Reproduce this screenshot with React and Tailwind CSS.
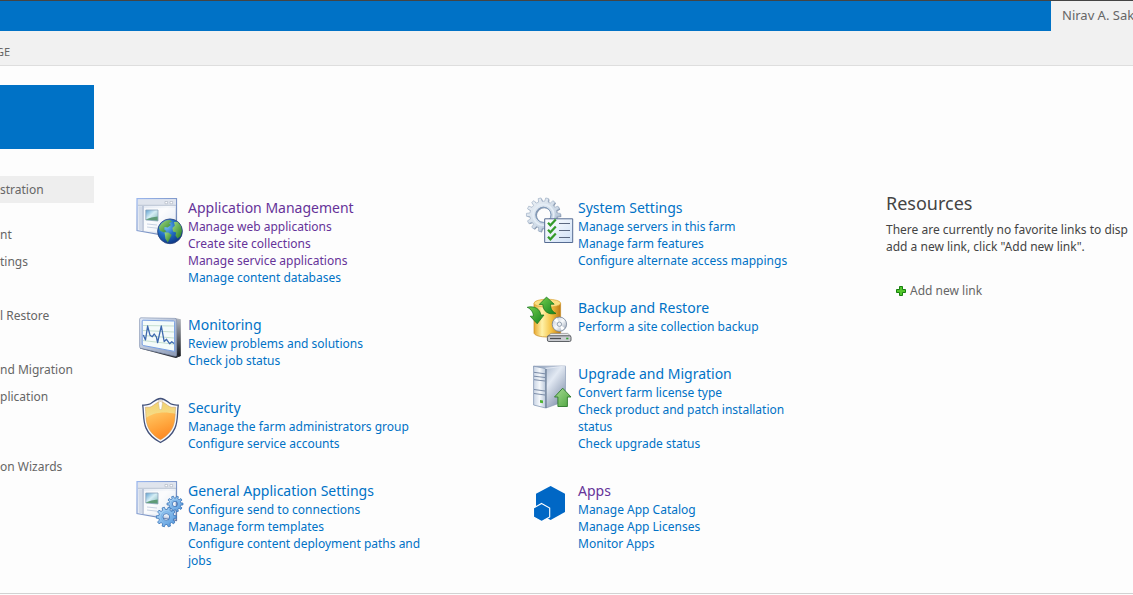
const SIDE_LINKS = ['nt', 'tings', '', 'l Restore', '', 'nd Migration', 'plication', '']

const LEFT = [
  {
    title: 'Application Management',
    Icon: WindowGlobeIcon,
    visited: true,
    links: [
      { label: 'Manage web applications', visited: true },
      { label: 'Create site collections', visited: true },
      { label: 'Manage service applications', visited: true },
      { label: 'Manage content databases' },
    ],
  },
  {
    title: 'Monitoring',
    Icon: MonitorIcon,
    links: [{ label: 'Review problems and solutions' }, { label: 'Check job status' }],
  },
  {
    title: 'Security',
    Icon: ShieldIcon,
    links: [{ label: 'Manage the farm administrators group' }, { label: 'Configure service accounts' }],
  },
  {
    title: 'General Application Settings',
    Icon: WindowGearsIcon,
    links: [
      { label: 'Configure send to connections' },
      { label: 'Manage form templates' },
      { label: 'Configure content deployment paths and jobs' },
    ],
  },
]

const RIGHT = [
  {
    title: 'System Settings',
    Icon: GearChecklistIcon,
    links: [
      { label: 'Manage servers in this farm' },
      { label: 'Manage farm features' },
      { label: 'Configure alternate access mappings' },
    ],
  },
  {
    title: 'Backup and Restore',
    Icon: BackupIcon,
    links: [{ label: 'Perform a site collection backup' }],
  },
  {
    title: 'Upgrade and Migration',
    Icon: ServerIcon,
    links: [
      { label: 'Convert farm license type' },
      { label: 'Check product and patch installation status' },
      { label: 'Check upgrade status' },
    ],
  },
  {
    title: 'Apps',
    Icon: AppsIcon,
    visited: true,
    links: [{ label: 'Manage App Catalog' }, { label: 'Manage App Licenses' }, { label: 'Monitor Apps' }],
  },
]

function Icon({ children }) {
  return (
    <svg viewBox="0 0 48 48" className="w-12 h-12 shrink-0 overflow-visible" aria-hidden="true">
      {children}
    </svg>
  )
}

// Toothed wheel outline around (cx, cy) with a round hole
function gearPath(cx, cy, outer, inner, hole, teeth) {
  const pts = []
  const step = (Math.PI * 2) / teeth
  for (let i = 0; i < teeth; i++) {
    const a = i * step
    ;[[-0.3, inner], [-0.19, outer], [0.19, outer], [0.3, inner]].forEach(([t, r]) => {
      pts.push(`${(cx + Math.cos(a + t * step) * r).toFixed(2)} ${(cy + Math.sin(a + t * step) * r).toFixed(2)}`)
    })
  }
  return `M${pts.join('L')}Z M${cx - hole} ${cy}a${hole} ${hole} 0 1 0 ${hole * 2} 0a${hole} ${hole} 0 1 0 ${-hole * 2} 0Z`
}

function AppWindow({ id }) {
  return (
    <>
      <defs>
        <linearGradient id={`${id}-body`} x1="0" y1="0" x2="1" y2="1">
          <stop offset="0" stopColor="#dbe3f0" />
          <stop offset="0.5" stopColor="#f6f8fb" />
          <stop offset="1" stopColor="#b4c2dc" />
        </linearGradient>
        <linearGradient id={`${id}-pic`} x1="0" y1="0" x2="1" y2="1">
          <stop offset="0" stopColor="#5e9fd0" />
          <stop offset="0.45" stopColor="#d5eef5" />
          <stop offset="1" stopColor="#7fb4b4" />
        </linearGradient>
        <linearGradient id={`${id}-edge`} x1="0" y1="0" x2="1" y2="1">
          <stop offset="0" stopColor="#9bb7ee" />
          <stop offset="1" stopColor="#667ca9" />
        </linearGradient>
      </defs>
      <path d="M1 .7H40.5V39.5L1 32.5Z" fill={`url(#${id}-body)`} stroke={`url(#${id}-edge)`} strokeWidth="1.2" />
      <path d="M2 1.6H39.8V7H2Z" fill="#dfe4ed" />
      <path d="M2 7.3H40" stroke="#b9c3d3" strokeWidth="1" />
      <path d="M29 3.5h2.6v2.2H29zM34 3.5h2.6v2.2H34z" fill="#fff" stroke="#a7b0c0" strokeWidth=".6" />
      <path d="M7 8V33.5" stroke="#a3b0c8" strokeWidth="1.2" />
      <path d="M8 10H39V37L8 32Z" fill="#fff" opacity=".55" />
      <path d="M2.7 8.5H6V32.3L2.7 31.7Z" fill="#d3dbe8" />
      <path d="M9.8 12H22V23L9.8 22Z" fill={`url(#${id}-pic)`} stroke="#8ea4bd" strokeWidth=".8" />
      <path d="M10.2 21.2L15.5 19.6L21.6 18.6V22.6L10.2 21.7Z" fill="#5e9b77" />
      <path d="M11 26L21 27M11 29L21 30.2" stroke="#c2cddf" strokeWidth=".9" />
    </>
  )
}

function WindowGlobeIcon() {
  return (
    <Icon>
      <AppWindow id="globe-win" />
      <defs>
        <radialGradient id="sea" cx=".35" cy=".3" r=".8">
          <stop offset="0" stopColor="#7cc4f5" />
          <stop offset=".45" stopColor="#236fc6" />
          <stop offset="1" stopColor="#092c79" />
        </radialGradient>
        <linearGradient id="land" x1="0" y1="0" x2="1" y2="1">
          <stop offset="0" stopColor="#a4dc83" />
          <stop offset="1" stopColor="#237c23" />
        </linearGradient>
      </defs>
      <circle cx="34" cy="33.3" r="12.4" fill="url(#sea)" stroke="#263f79" strokeWidth=".8" />
      <path d="M23 29.5C25 25 29 22.2 33.5 22L36 23.4L33 25.2L35 27L31.5 29.5L28.5 29L28.2 31.6L30.5 33.2L28 34.5L24 32.8Z" fill="url(#land)" />
      <path d="M28.6 34.6L32.5 34.4L35.7 37L34 40.2L31.8 44.5L29.4 40.8Z" fill="url(#land)" />
      <path d="M38 24L41.5 23.8L45 28L46 33L44.7 38L41.5 40.5L39.5 37.5L40.2 34.5L37 33.4L36.4 30L38.8 27.8Z" fill="url(#land)" />
    </Icon>
  )
}

function WindowGearsIcon() {
  return (
    <Icon>
      <AppWindow id="gears-win" />
      <defs>
        <linearGradient id="blue-gear" x1="0" y1="0" x2="1" y2="1">
          <stop offset="0" stopColor="#bee1fb" />
          <stop offset="1" stopColor="#4d93da" />
        </linearGradient>
      </defs>
      <path d={gearPath(39, 23, 8, 5.9, 2.7, 10)} fill="url(#blue-gear)" fillRule="evenodd" stroke="#3772b8" strokeWidth=".8" />
      <path d={gearPath(30.3, 36, 10, 7.6, 3.4, 10)} fill="url(#blue-gear)" fillRule="evenodd" stroke="#3772b8" strokeWidth=".8" />
      <circle cx="30.3" cy="36" r="5.2" fill="none" stroke="#74afe6" strokeWidth=".8" />
      <circle cx="39" cy="23" r="4" fill="none" stroke="#74afe6" strokeWidth=".7" />
    </Icon>
  )
}

function MonitorIcon() {
  return (
    <Icon>
      <defs>
        <linearGradient id="mon-frame" x1="0" y1="0" x2="1" y2="1">
          <stop offset="0" stopColor="#e4ecf8" />
          <stop offset="1" stopColor="#8b99b5" />
        </linearGradient>
        <linearGradient id="mon-side" x1="0" y1="0" x2="0" y2="1">
          <stop offset="0" stopColor="#b4b8c0" />
          <stop offset="1" stopColor="#111318" />
        </linearGradient>
      </defs>
      <path d="M39 3L44.8 4.2V41L39.5 43Z" fill="url(#mon-side)" />
      <path d="M4 33.5L39.5 43L44.5 41L40 40L5 31Z" fill="#30343d" />
      <path d="M5 2.8L39 3.4Q40.6 3.5 40.6 5V39.5Q40.6 41.5 38.8 41.1L4.8 33.3Q3.6 33 3.6 31.7V4.3Q3.6 2.8 5 2.8Z" fill="url(#mon-frame)" stroke="#8494b2" strokeWidth=".7" />
      <path d="M7 5.2L37.6 6Q38.6 6 38.6 7.2V36.4L7.2 30.5Q6.2 30.2 6.2 29V6Q6.2 5.2 7 5.2Z" fill="#f4fbfa" stroke="#779fe3" strokeWidth="1" />
      <path d="M7 10.5L38 11M7 15.5L38 17M7 20.5L38 23M7 25.5L38 29.2" stroke="#b9d7c4" strokeWidth=".8" />
      <path d="M7.3 20L9.5 25L11.6 11L14 20.2L16.3 21.7L18.3 19L20.4 22L21.6 27.6L25.3 11L28.2 26.6L30.5 24.3L33.6 28.7L35.8 26.7L38 28.4" fill="none" stroke="#3c68ae" strokeWidth="1.3" strokeLinejoin="round" />
    </Icon>
  )
}

function ShieldIcon() {
  return (
    <Icon>
      <defs>
        <linearGradient id="shield-top" x1="0" y1="0" x2="0" y2="1">
          <stop offset="0" stopColor="#f0cf6a" />
          <stop offset="1" stopColor="#fff0b4" />
        </linearGradient>
        <linearGradient id="shield-low" x1=".2" y1="0" x2=".7" y2="1">
          <stop offset="0" stopColor="#ffc864" />
          <stop offset=".5" stopColor="#ffa33a" />
          <stop offset="1" stopColor="#fb7b18" />
        </linearGradient>
        <clipPath id="shield-clip">
          <path d="M24.5 3.5C20.5 4.2 18.2 7 15.5 8.5C13.3 9.8 11.4 9 9.3 9.3C10.7 20 7.5 32 24.5 41.8C41.5 32 38.3 20 39.7 9.3C37.6 9 35.7 9.8 33.5 8.5C30.8 7 28.5 4.2 24.5 3.5Z" />
        </clipPath>
      </defs>
      <path d="M24.5.5C20 .8 17.4 4 14.5 5.8C12 7.3 9.8 6.4 6.7 7.2C8.8 18 3.8 33.5 24.5 44.5C45.2 33.5 40.2 18 42.3 7.2C39.2 6.4 37 7.3 34.5 5.8C31.6 4 29 .8 24.5.5Z" fill="#fbfcff" stroke="#43527b" strokeWidth="1.3" />
      <g clipPath="url(#shield-clip)">
        <path d="M5 0H44V45H5Z" fill="url(#shield-top)" />
        <path d="M5 25C13 14 28 12 44 17V45H5Z" fill="url(#shield-low)" />
      </g>
      <path d="M22.2 2.5L23.5 11.5H25.5L26.8 2.5Z" fill="#fff" stroke="#b9a98a" strokeWidth=".4" />
      <path d="M24.5 3.5C20.5 4.2 18.2 7 15.5 8.5C13.3 9.8 11.4 9 9.3 9.3C10.7 20 7.5 32 24.5 41.8C41.5 32 38.3 20 39.7 9.3C37.6 9 35.7 9.8 33.5 8.5C30.8 7 28.5 4.2 24.5 3.5Z" fill="none" stroke="#c79b62" strokeWidth=".5" />
    </Icon>
  )
}

function GearChecklistIcon() {
  return (
    <Icon>
      <defs>
        <linearGradient id="grey-gear" x1="0" y1="0" x2="1" y2="1">
          <stop offset="0" stopColor="#f0f4f8" />
          <stop offset=".6" stopColor="#cdd9e6" />
          <stop offset="1" stopColor="#8ca2bd" />
        </linearGradient>
        <linearGradient id="sheet" x1="0" y1="0" x2="1" y2="1">
          <stop offset="0" stopColor="#ffffff" />
          <stop offset="1" stopColor="#cfe0f6" />
        </linearGradient>
      </defs>
      <path d={gearPath(18.3, 17.6, 17, 13.6, 7.3, 14)} fill="#8696ad" fillRule="evenodd" />
      <path d={gearPath(17.4, 16.8, 17, 13.6, 7.6, 14)} fill="url(#grey-gear)" fillRule="evenodd" stroke="#9fb0c6" strokeWidth=".7" />
      <circle cx="17.4" cy="16.8" r="10.4" fill="none" stroke="#e4edf6" strokeWidth="1.6" />
      <circle cx="17.4" cy="16.8" r="7.6" fill="none" stroke="#7592b5" strokeWidth=".8" />
      <path d="M18.7 20.8H46.7V44.5H18.7Z" fill="url(#sheet)" stroke="#556b92" strokeWidth="1" />
      <path d="M33 25.5H44M33 32.5H44M33 39.5H44" stroke="#5b6880" strokeWidth="1" />
      <path d="M22 24.8L24.4 27.3L29.8 21.5M22 31.8L24.4 34.3L29.8 28.5M22 38.8L24.4 41.3L29.8 35.5" fill="none" stroke="#349b2a" strokeWidth="2.2" />
    </Icon>
  )
}

function BackupIcon() {
  return (
    <Icon>
      <defs>
        <linearGradient id="drum" x1="0" y1="0" x2="1" y2="0">
          <stop offset="0" stopColor="#e7a72e" />
          <stop offset=".3" stopColor="#fff2a9" />
          <stop offset=".65" stopColor="#f5c244" />
          <stop offset="1" stopColor="#bc7813" />
        </linearGradient>
        <linearGradient id="leaf" x1="0" y1="0" x2="1" y2="1">
          <stop offset="0" stopColor="#74d04d" />
          <stop offset="1" stopColor="#14831f" />
        </linearGradient>
        <linearGradient id="disc" x1="0" y1="0" x2="1" y2="1">
          <stop offset="0" stopColor="#b7c1cf" />
          <stop offset=".5" stopColor="#f9fbfd" />
          <stop offset="1" stopColor="#8996a9" />
        </linearGradient>
      </defs>
      <path d="M8 5.2V34.8C8 40.4 34.6 40.4 34.6 34.8V5.2Z" fill="url(#drum)" stroke="#c98d22" strokeWidth=".7" />
      <ellipse cx="21.3" cy="5.2" rx="13.3" ry="4" fill="#fbdf80" stroke="#d8a236" strokeWidth=".7" />
      <path d="M20.5 -1L28.2 6.2H24.6C24.3 10.3 26 13.3 30 15.4C22.5 17.3 17 13.3 16.8 6.5H13.2Z" fill="url(#leaf)" stroke="#12701b" strokeWidth=".7" />
      <path d="M1.2 9.3C8.5 7.5 14.2 11 14.8 17H18L11.2 25.8L4.2 18.2H7.4C7.2 14.5 5.5 11.3 1.2 9.3Z" fill="url(#leaf)" stroke="#12701b" strokeWidth=".7" />
      <circle cx="33.4" cy="26.2" r="7.2" fill="url(#disc)" stroke="#748297" strokeWidth=".8" />
      <path d="M33.4 26.2L28 22.5A6.5 6.5 0 0 1 31 20.1ZM33.4 26.2L38.5 30A6.5 6.5 0 0 1 35.5 32.3Z" fill="#fff" />
      <circle cx="33.4" cy="26.2" r="2.2" fill="#eef2f5" stroke="#7e8b9d" strokeWidth=".8" />
      <path d="M25 35.4H41.7L44.9 38.2H21.5Z" fill="#e7e8ea" stroke="#777" strokeWidth=".6" />
      <rect x="21.4" y="37.8" width="23.6" height="5.7" rx="1.5" fill="#c9cbd0" stroke="#4e5156" strokeWidth=".9" />
      <path d="M24 40.5H35" stroke="#4b4e52" strokeWidth="1.3" />
      <path d="M40.2 40.5H42.4" stroke="#2da42e" strokeWidth="1.6" />
    </Icon>
  )
}

function ServerIcon() {
  return (
    <Icon>
      <defs>
        <linearGradient id="srv-front" x1="0" y1="0" x2="1" y2="0">
          <stop offset="0" stopColor="#c9d4e4" />
          <stop offset=".5" stopColor="#f5f8fb" />
          <stop offset="1" stopColor="#b9c7da" />
        </linearGradient>
        <linearGradient id="srv-side" x1="0" y1="0" x2="1" y2="1">
          <stop offset="0" stopColor="#8598b5" />
          <stop offset=".45" stopColor="#e2e9f3" />
          <stop offset="1" stopColor="#6c7d9b" />
        </linearGradient>
        <linearGradient id="up-arrow" x1="0" y1="0" x2="1" y2="1">
          <stop offset="0" stopColor="#a8dc94" />
          <stop offset="1" stopColor="#4da43e" />
        </linearGradient>
      </defs>
      <path d="M7.6 2.2L39.5 2V37L20 44Z" fill="url(#srv-side)" stroke="#8c9cb7" strokeWidth=".7" />
      <path d="M7.6 2.2L19.8 4.6V44L7.6 41Z" fill="url(#srv-front)" stroke="#8799b5" strokeWidth=".8" />
      <path d="M19.5 4.5L39.5 2" stroke="#e8eef6" strokeWidth=".8" />
      <path d="M8 8.3L19 9.8M8 12.2L19 13.5M8 15.7L19 17M8 25.5L19 27M8 29.5L19 31" stroke="#71829f" strokeWidth=".9" />
      <path d="M14 36L17 36.5V39.2L14 38.7Z" fill="#4fb332" />
      <path d="M20 5V44" stroke="#52647f" strokeWidth=".8" />
      <path d="M36.7 24.2L45 33H41.4V42.5H31.9V33H28.5Z" fill="url(#up-arrow)" stroke="#2d782a" strokeWidth=".9" />
    </Icon>
  )
}

function AppsIcon() {
  return (
    <Icon>
      <path d="M24.6 5L39 12.8V31L24.6 39L10 31V12.8Z" fill="#0067c5" />
      <path d="M15.6 22.5L23.7 27V36L15.6 40.5L7.5 36V27Z" fill="#0067c5" stroke="#fff" strokeWidth="1.1" />
    </Icon>
  )
}

function Section({ title, Icon: SectionIcon, visited, links }) {
  return (
    <section className="group flex gap-1">
      <SectionIcon />
      <div className="w-60 pb-[29px] group-last:pb-6">
        <h2 className="text-[14px] leading-5">
          <a href="#" className={visited ? 'text-[#663399]' : 'text-[#0072c6]'}>{title}</a>
        </h2>
        <ul>
          {links.map((l) => (
            <li key={l.label} className="leading-[17px]">
              <a href="#" className={l.visited ? 'text-[#663399]' : 'text-[#0072c6]'}>{l.label}</a>
            </li>
          ))}
        </ul>
      </div>
    </section>
  )
}

export default function App() {
  return (
    <div className="min-h-screen overflow-hidden bg-[#fdfdfd] font-['Noto_Sans','Open_Sans',sans-serif] text-[12px] text-[#444]">
      {/* Suite bar */}
      <header className="border-t border-[#444] bg-[#f1f1f1]">
        <div className="flex h-[30px]">
          <div className="flex-1 bg-[#0072c6]" />
          <button className="w-[82px] pl-[11px] text-left text-[13px] whitespace-nowrap text-[#666]">Nirav A. Sak</button>
        </div>
        <div className="flex h-[35px] items-center border-b border-[#dedede] pt-2">
          <button className="-ml-1 text-[11px] text-[#666]">GE</button>
        </div>
      </header>

      <div className="flex">
        {/* Quick launch */}
        <aside className="w-[94px] shrink-0 pt-[19px] text-[#666]">
          <div className="h-16 bg-[#0072c6]" />
          <nav className="mt-[27px]">
            <a href="#" className="block bg-[#eee] leading-[27px]">stration</a>
            <ul className="mt-[18px] mb-4 leading-[27px] whitespace-nowrap">
              {SIDE_LINKS.map((label, i) => (
                <li key={i} className="h-[27px]">
                  {label && <a href="#">{label}</a>}
                </li>
              ))}
            </ul>
            <a href="#" className="block leading-[27px] whitespace-nowrap">on Wizards</a>
          </nav>
        </aside>

        {/* Main */}
        <main className="flex min-w-0 flex-1 pt-[124px] pl-[42px]">
          <div className="w-[390px] shrink-0 pt-2">
            {LEFT.map((s) => <Section key={s.title} {...s} />)}
          </div>
          <div className="w-[360px] shrink-0 pt-2">
            {RIGHT.map((s) => <Section key={s.title} {...s} />)}
          </div>
          <section className="min-w-0 flex-1 whitespace-nowrap">
            <h2 className="text-[18px] leading-[26px]">Resources</h2>
            <p className="mt-[5px] leading-[17px]">
              There are currently no favorite links to disp
              <br />
              add a new link, click "Add new link".
            </p>
            <a href="#" className="mt-[27px] ml-[10px] flex items-center gap-1 leading-[17px] text-[#666]">
              <svg viewBox="0 0 10 10" className="h-[10px] w-[10px]" aria-hidden="true">
                <path d="M3.5.5h3v3h3v3h-3v3h-3v-3h-3v-3h3z" fill="#53c62c" stroke="#18800f" />
              </svg>
              Add new link
            </a>
          </section>
        </main>
      </div>
      <footer className="border-t border-[#d2d2d2]" />
    </div>
  )
}
